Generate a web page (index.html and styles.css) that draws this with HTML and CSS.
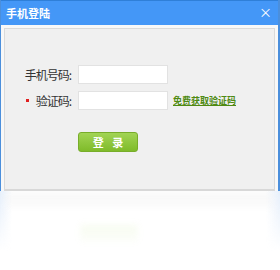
FILE: index.html
```html
<!DOCTYPE html>
<html lang="zh">
<head>
    <meta charset="UTF-8">
    <title>手机登陆</title>
    <link rel="stylesheet" href="styles.css">
</head>
<body>
<div class="dialog">
    <div class="titlebar">
        <span class="title">手机登陆</span>
        <span class="close">&#215;</span>
    </div>
    <div class="body">
        <div class="panel">
            <div class="row">
                <label class="label">手机号码:</label>
                <input class="field" type="text">
            </div>
            <div class="row">
                <label class="label"><span class="star"></span>验证码:</label>
                <input class="field" type="text">
                <a class="getcode" href="#">免费获取验证码</a>
            </div>
            <div class="actions">
                <button class="btn">登 录</button>
            </div>
        </div>
    </div>
</div>
<div class="reflection">
    <div class="ghost-panel"></div>
    <div class="ghost-btn"></div>
</div>
</body>
</html>
```

FILE: styles.css
```css
body {
    margin: 0;
    padding: 0;
    width: 280px;
    background: #fff;
    font-family: "Noto Sans CJK SC", "Noto Sans", sans-serif;
    font-size: 12px;
    color: #333;
}

.dialog {
    width: 280px;
    box-sizing: border-box;
    border-left: 1px solid #4b8fdc;
    border-right: 2px solid #4b8fdc;
    background: #f8f8f8;
}

.titlebar {
    height: 24px;
    border-top: 1px solid #2f7fd8;
    background: #4497f7;
    color: #fff;
    display: flex;
    justify-content: space-between;
    align-items: center;
    padding: 0 6px 0 5px;
}

.title {
    font-size: 11px;
    font-weight: bold;
}

.close {
    font-size: 13px;
    line-height: 1;
    margin-top: -4px;
}

.body {
    padding: 3px 3px 0 3px;
}

.panel {
    height: 124px;
    padding-top: 36px;
    border: 1px solid #dadada;
    border-bottom: 2px solid #d8d8d8;
    background: #f0f0f0;
}

.row {
    display: flex;
    align-items: center;
    height: 19px;
    margin-bottom: 7px;
}

.label {
    width: 66px;
    padding-right: 7px;
    color: #333;
    font-size: 12px;
    letter-spacing: -1px;
    display: flex;
    justify-content: flex-end;
    align-items: center;
}

.star {
    width: 3px;
    height: 3px;
    background: #e02020;
    margin-right: 7px;
}

.field {
    width: 90px;
    height: 19px;
    box-sizing: border-box;
    border: 1px solid #e2e2e2;
    background: #fff;
    padding: 0 3px;
    outline: none;
}

.getcode {
    margin-left: 5px;
    color: #4f8a12;
    font-size: 9px;
    font-weight: bold;
    text-decoration: underline;
}

.actions {
    padding-left: 73px;
    padding-top: 15px;
}

.btn {
    width: 60px;
    height: 20px;
    border: 1px solid #78ad2a;
    border-radius: 3px;
    background: linear-gradient(#a2d454, #7fbb2a);
    color: #fff;
    font-family: "Noto Sans CJK SC", sans-serif;
    font-size: 11px;
    font-weight: bold;
    letter-spacing: 3px;
    padding: 0 0 0 3px;
}

.reflection {
    height: 80px;
    padding-top: 1px;
    background:
        linear-gradient(to right, rgba(170, 200, 240, 0.3), rgba(255, 255, 255, 0) 12px, rgba(255, 255, 255, 0) 266px, rgba(170, 200, 240, 0.3));
    -webkit-mask-image: linear-gradient(#000, rgba(0, 0, 0, 0) 75%);
    mask-image: linear-gradient(#000, rgba(0, 0, 0, 0) 75%);
}

.ghost-panel {
    height: 16px;
    margin: 0 6px;
    background: rgba(235, 235, 235, 0.3);
    filter: blur(3px);
}

.ghost-btn {
    width: 58px;
    height: 18px;
    margin: 17px 0 0 80px;
    border-radius: 4px;
    background: rgba(170, 220, 90, 0.2);
    filter: blur(3px);
}
```
